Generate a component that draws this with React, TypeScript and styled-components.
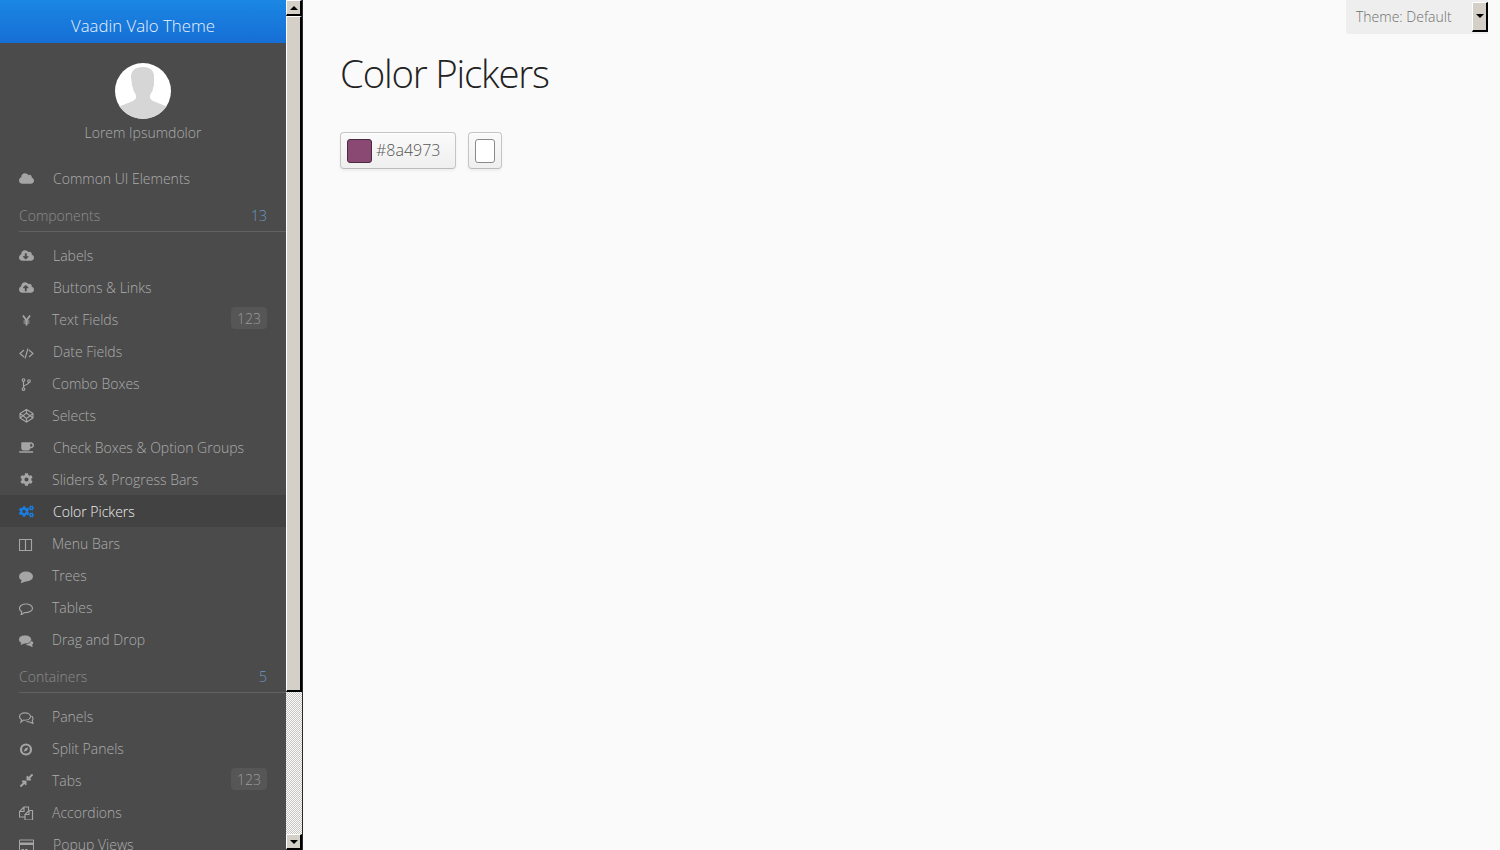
import React from 'react';
import styled, { createGlobalStyle } from 'styled-components';
import { FaCloud, FaCloudDownloadAlt, FaCloudUploadAlt, FaCoffee, FaCog, FaCogs, FaCompressAlt } from 'react-icons/fa';

const GlobalStyle = createGlobalStyle`
  html, body { margin: 0; height: 100%; overflow: hidden; background: #fafafa; }
  body { font-family: "Open Sans", "Liberation Sans", sans-serif; font-weight: 300; }
  * { box-sizing: border-box; }
`;

const Page = styled.div`
  display: flex;
  height: 850px;
  width: 1500px;
  overflow: hidden;
`;

const Sidebar = styled.nav`
  width: 286px;
  flex: none;
  height: 850px;
  overflow: hidden;
  background: #4b4b4b;
`;

const Header = styled.div`
  height: 43px;
  display: flex;
  align-items: center;
  justify-content: center;
  background: linear-gradient(to bottom, #1b87e3, #166ed5);
  color: #e8f2fc;
  font-size: 16.8px;
  padding-top: 7px;
`;

const Profile = styled.div`
  height: 119px;
  padding-top: 20px;
  display: flex;
  flex-direction: column;
  align-items: center;
`;

const Avatar = styled.svg`
  display: block;
  width: 56px;
  height: 56px;
  border-radius: 50%;
`;

const UserName = styled.div`
  font-size: 14px;
  line-height: 20px;
  margin-top: 4px;
  color: #adadad;
`;

const Row = styled.div<{ $active?: boolean; $indent: number }>`
  height: 32px;
  display: flex;
  align-items: center;
  padding: 0 19px;
  font-size: 14px;
  color: ${(p) => (p.$active ? '#f0f0f0' : '#adadad')};
  background: ${(p) => (p.$active ? '#424242' : 'transparent')};

  & > svg {
    width: 15px;
    height: 15px;
    flex: none;
    margin-right: ${(p) => p.$indent - 34}px;
    color: ${(p) => (p.$active ? '#197de1' : '#a5a5a5')};
  }
`;

const RowLabel = styled.span`
  flex: 1;
`;

const Badge = styled.span`
  width: 36px;
  height: 22px;
  border-radius: 4px;
  background: #565656;
  color: #9a9a9a;
  font-size: 14px;
  line-height: 24px;
  text-align: center;
  margin-top: -2px;
`;

const Caption = styled.div`
  height: 38px;
  margin: 0 0 7px 19px;
  padding: 5px 19px 0 0;
  display: flex;
  align-items: center;
  justify-content: space-between;
  border-bottom: 1px solid #626262;
  font-size: 14px;
  color: #8c8c8c;
`;

const CaptionCount = styled.span`
  color: #6a97c4;
`;

const Scrollbar = styled.div`
  width: 17px;
  flex: none;
  height: 850px;
  display: flex;
  flex-direction: column;
  border-right: 1px solid #2a2a2a;
  background: repeating-conic-gradient(#c9c6bf 0 25%, #fafafa 0 50%) 0 0 / 2px 2px;
`;

const bevel = `
  background: #d4d0c8;
  border-style: solid;
  border-width: 1px 2px 2px 1px;
  border-color: #fff #000 #000 #fff;
`;

const ScrollButton = styled.div`
  ${bevel}
  width: 16px;
  height: 16px;
  flex: none;
  display: flex;
  align-items: center;
  justify-content: center;
`;

const ScrollThumb = styled.div`
  ${bevel}
  width: 16px;
  height: 676px;
  flex: none;
`;

const ScrollTrack = styled.div`
  flex: 1;
`;

const Arrow = styled.span<{ $up?: boolean }>`
  width: 0;
  height: 0;
  border-left: 4px solid transparent;
  border-right: 4px solid transparent;
  ${(p) => (p.$up ? 'border-bottom: 4px solid #000;' : 'border-top: 4px solid #000;')}
`;

const Main = styled.main`
  flex: 1;
  position: relative;
  padding: 48px 37px 0;
  background: #fafafa;
`;

const ThemeSelect = styled.div`
  position: absolute;
  top: 0;
  left: 1043px;
  width: 142px;
  height: 34px;
  padding-left: 10px;
  display: flex;
  align-items: center;
  justify-content: space-between;
  background: #eeeeee;
  border-bottom-left-radius: 4px;
  font-size: 14px;
  color: #6f6f6f;
`;

const SelectLabel = styled.span`
  margin-top: -2px;
`;

const SelectButton = styled(ScrollButton)`
  height: 30px;
  margin-top: -1px;
`;

const Title = styled.h1`
  margin: 0;
  font-size: 38.4px;
  line-height: 50px;
  font-weight: 300;
  letter-spacing: -1.2px;
  color: #222;
`;

const Pickers = styled.div`
  display: flex;
  gap: 12px;
  margin-top: 34px;
`;

const PickerButton = styled.div`
  height: 37px;
  padding: 0 6px;
  display: flex;
  align-items: center;
  gap: 4px;
  border: 1px solid #c5c5c5;
  border-bottom-color: #bcbcbc;
  border-radius: 4px;
  background: linear-gradient(to bottom, #fafafa, #efefef);
  box-shadow: inset 0 1px 0 #fff, 0 2px 3px rgba(0, 0, 0, 0.05);
  font-size: 16px;
  color: #555;
`;

const Swatch = styled.span<{ $color: string; $border: string; $wide?: boolean }>`
  display: block;
  width: ${(p) => (p.$wide ? '25px' : '20px')};
  height: 24px;
  border-radius: 3px;
  background: ${(p) => p.$color};
  border: 1px solid ${(p) => p.$border};
`;

const HexValue = styled.span`
  padding-right: 9px;
  margin-top: -2px;
`;

const SmallCog = styled(FaCog)`
  padding: 1px;
`;

const Line = ({ children }: { children: React.ReactNode }) => (
  <svg viewBox="0 0 15 15" fill="none" stroke="currentColor" strokeWidth="1.15">
    {children}
  </svg>
);

const YenIcon = () => (
  <Line>
    <path strokeWidth="1.8" d="M4 3.500 7.500 8.500 11 3.500M7.500 8.500V13.500" />
    <path d="M4.500 9H10.500M4.500 11H10.500" />
  </Line>
);
const CodeIcon = () => (
  <Line>
    <path d="M5 6 1 9.500 5 13M10 6 14 9.500 10 13M9 4.500 6 14.500" />
  </Line>
);
const ForkIcon = () => (
  <Line>
    <circle cx="4.500" cy="4" r="1.300" />
    <circle cx="4.500" cy="13" r="1.300" />
    <circle cx="10" cy="5" r="1.300" />
    <path d="M4.500 5.300V11.700M10 6.300C10 9 4.500 8.500 4.500 11" />
  </Line>
);
const CodepenIcon = () => (
  <Line>
    <path d="M7.500 1.500 14 5.500V10L7.500 14 1 10V5.500ZM7.500 5 11 7.700 7.500 10.500 4 7.700ZM7.500 1.500V5M7.500 10.500V14M1 5.500 4 7.700 1 10M14 5.500 11 7.700 14 10" />
  </Line>
);
const ColumnsIcon = () => (
  <Line>
    <path d="M.5 3.500H12.500V14.500H.5ZM6.500 3.500V14.500" />
  </Line>
);
const CommentIcon = () => (
  <svg viewBox="0 0 15 15" fill="currentColor">
    <ellipse cx="7" cy="8.500" rx="7" ry="5" />
    <path d="M3 11.500 1.500 15.500 7.500 13Z" />
  </svg>
);
const CommentOutlineIcon = () => (
  <Line>
    <path d="M7 4C10.600 4 13.500 5.900 13.500 8.300 13.500 10.700 10.600 12.600 7 12.600 6.400 12.600 5.900 12.600 5.400 12.500L2 15C2.400 13.900 2.700 12.900 2.800 11.800 1.400 11 .5 9.700 .5 8.300 .5 5.900 3.400 4 7 4Z" />
  </Line>
);
const CommentsIcon = () => (
  <svg viewBox="0 0 15 15" fill="currentColor">
    <path d="M11 7.500 14 10C14.600 11.200 14 12.300 13 13L14 15.500 10.500 13.800 7 13Z" />
    <ellipse cx="6" cy="7.500" rx="6.500" ry="4.500" stroke="#4b4b4b" strokeWidth=".8" />
    <path d="M2.500 10 1.500 13 5.500 11.500Z" />
  </svg>
);
const CommentsOutlineIcon = () => (
  <Line>
    <path d="M6 3.800C9 3.800 11.500 5.400 11.500 7.500 11.500 9.600 9 11.200 6 11.200L4.500 11.100 2 13C2.300 12.200 2.400 11.300 2.400 10.500 1.200 9.800 .5 8.700 .5 7.500 .5 5.400 3 3.800 6 3.800Z" />
    <path d="M12.500 7C14.200 8.400 14.500 10.300 13.200 11.800L14 14.500 10.500 13 7.500 12.500" />
  </Line>
);
const CompassIcon = () => (
  <svg viewBox="0 0 15 15">
    <circle cx="7" cy="8.500" r="5" fill="none" stroke="currentColor" strokeWidth="2.200" />
    <path d="M9.300 6.200 8 9.500 4.700 10.800 6 7.500Z" fill="currentColor" />
  </svg>
);
const CopyIcon = () => (
  <Line>
    <path d="M5 2 .5 6.500V12H6M5 2H9.500V5.500M5 2V6.500H.5" />
    <path d="M10 5.500H13.500V15H6V9.500ZM10 5.500V9.500H6" />
  </Line>
);
const CardIcon = () => (
  <svg viewBox="0 0 15 15" fill="currentColor">
    <path d="M.5 3h14v12H.5Z" fill="none" stroke="currentColor" />
    <path d="M1 5.500h13V8H1ZM2.500 12h2.500v1H2.500ZM6 12h2.500v1H6Z" />
  </svg>
);

type Item = { label: string; icon: React.ElementType; indent: number; badge?: string; active?: boolean };

const components: Item[] = [
  { label: 'Labels', icon: FaCloudDownloadAlt, indent: 53 },
  { label: 'Buttons & Links', icon: FaCloudUploadAlt, indent: 53 },
  { label: 'Text Fields', icon: YenIcon, indent: 52, badge: '123' },
  { label: 'Date Fields', icon: CodeIcon, indent: 53 },
  { label: 'Combo Boxes', icon: ForkIcon, indent: 52 },
  { label: 'Selects', icon: CodepenIcon, indent: 52 },
  { label: 'Check Boxes & Option Groups', icon: FaCoffee, indent: 53 },
  { label: 'Sliders & Progress Bars', icon: SmallCog, indent: 52 },
  { label: 'Color Pickers', icon: FaCogs, indent: 53, active: true },
  { label: 'Menu Bars', icon: ColumnsIcon, indent: 52 },
  { label: 'Trees', icon: CommentIcon, indent: 52 },
  { label: 'Tables', icon: CommentOutlineIcon, indent: 52 },
  { label: 'Drag and Drop', icon: CommentsIcon, indent: 52 },
];

const containers: Item[] = [
  { label: 'Panels', icon: CommentsOutlineIcon, indent: 52 },
  { label: 'Split Panels', icon: CompassIcon, indent: 52 },
  { label: 'Tabs', icon: FaCompressAlt, indent: 52, badge: '123' },
  { label: 'Accordions', icon: CopyIcon, indent: 52 },
  { label: 'Popup Views', icon: CardIcon, indent: 53 },
];

const MenuRow = ({ item }: { item: Item }) => {
  const Icon = item.icon;
  return (
    <Row $active={item.active} $indent={item.indent}>
      <Icon />
      <RowLabel>{item.label}</RowLabel>
      {item.badge && <Badge>{item.badge}</Badge>}
    </Row>
  );
};

export default function App() {
  return (
    <Page>
      <GlobalStyle />
      <Sidebar>
        <Header>Vaadin Valo Theme</Header>
        <Profile>
          <Avatar viewBox="0 0 56 56">
            <rect width="56" height="56" fill="#fff" />
            <path
              d="M16 14Q16 4 28 4 39 4 39 14L39 22Q38 28 35 32L35 35Q36 37 38 38L53 44V56H3V44L18 38Q20 37 21 35L21 32Q18 28 17 22Z"
              fill="#d6d6d6"
            />
          </Avatar>
          <UserName>Lorem Ipsumdolor</UserName>
        </Profile>
        <MenuRow item={{ label: 'Common UI Elements', icon: FaCloud, indent: 53 }} />
        <Caption>
          Components <CaptionCount>13</CaptionCount>
        </Caption>
        {components.map((item) => (
          <MenuRow key={item.label} item={item} />
        ))}
        <Caption>
          Containers <CaptionCount>5</CaptionCount>
        </Caption>
        {containers.map((item) => (
          <MenuRow key={item.label} item={item} />
        ))}
      </Sidebar>
      <Scrollbar>
        <ScrollButton>
          <Arrow $up />
        </ScrollButton>
        <ScrollThumb />
        <ScrollTrack />
        <ScrollButton>
          <Arrow />
        </ScrollButton>
      </Scrollbar>
      <Main>
        <ThemeSelect>
          <SelectLabel>Theme: Default</SelectLabel>
          <SelectButton>
            <Arrow />
          </SelectButton>
        </ThemeSelect>
        <Title>Color Pickers</Title>
        <Pickers>
          <PickerButton>
            <Swatch $color="#8a4973" $border="#4a2a40" $wide />
            <HexValue>#8a4973</HexValue>
          </PickerButton>
          <PickerButton>
            <Swatch $color="#ffffff" $border="#8a8a8a" />
          </PickerButton>
        </Pickers>
      </Main>
    </Page>
  );
}
